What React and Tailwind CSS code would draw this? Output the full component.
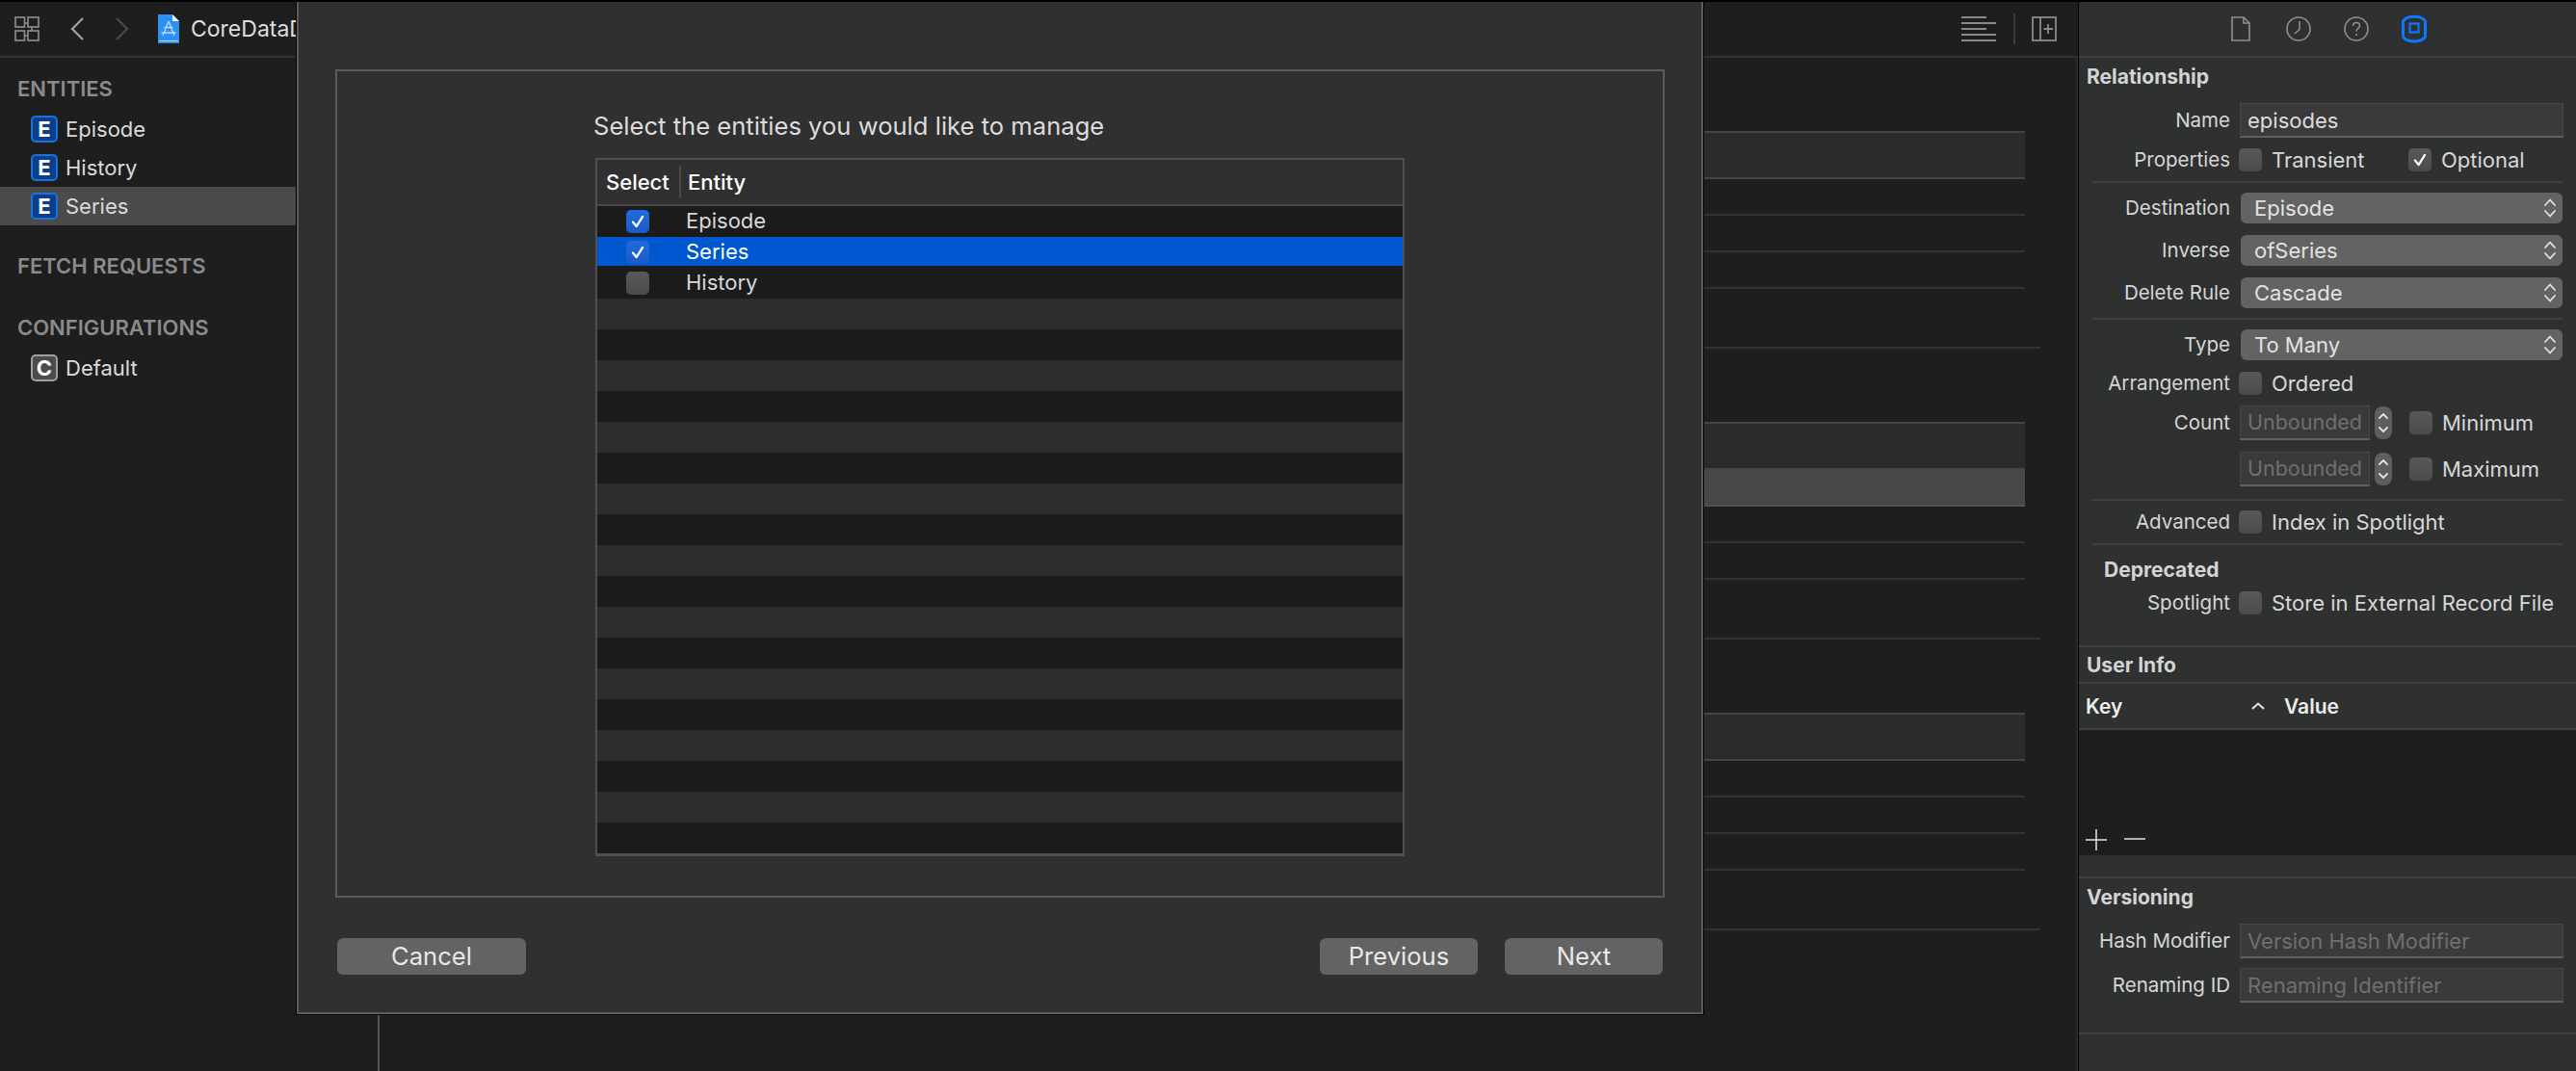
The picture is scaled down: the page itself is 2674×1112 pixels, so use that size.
import React from 'react';

const ROW_COUNT = 21;
const entities = [
  { name: 'Episode', checked: true },
  { name: 'Series', checked: true, selected: true },
  { name: 'History', checked: false },
];

const ENTITY_ICON = 'border-2 border-[#1c70dc] bg-[#0b3f88]';
const CONFIG_ICON = 'border-2 border-[#a0a0a0] bg-[#4c4c4c]';

function SidebarHeading({ children, className }) {
  return (
    <div className={`h-[28px] flex items-center pl-[18px] text-[22px] font-semibold text-[#8b8b8b] ${className}`}>
      {children}
    </div>
  );
}

function SidebarRow({ letter, label, active, iconClass }) {
  return (
    <div className={`h-[40px] flex items-center pl-[32px] ${active ? 'bg-[#4b4b4b]' : ''}`}>
      <div className={`w-[28px] h-[28px] rounded-[5px] flex items-center justify-center text-[22px] font-bold text-white ${iconClass}`}>
        {letter}
      </div>
      <span className="ml-[8px] text-[22px] text-[#dadada]">{label}</span>
    </div>
  );
}

function EditorBlock({ selected, rows = 3 }) {
  return (
    <div className="mt-[76px] w-[1708px]">
      <div className={`bg-[#2b2b2b] border-t-2 border-[#444] ${selected ? 'h-[48px]' : 'h-[50px] border-b-2'}`} />
      {selected && <div className="h-[40px] bg-[#474747] border-b-2 border-[#525252]" />}
      {Array.from({ length: selected ? 2 : rows }).map((_, i) => (
        <div key={i} className="h-[38px] border-b-2 border-[#333]" />
      ))}
      <div className="h-[62px] w-[1724px] border-b-2 border-[#333]" />
    </div>
  );
}

function Check({ className }) {
  return (
    <svg viewBox="0 0 16 16" className={className} fill="none" stroke="currentColor" strokeWidth="2" strokeLinecap="round" strokeLinejoin="round">
      <path d="M3.5 8.5 L6.8 12.5 L12.5 3.5" />
    </svg>
  );
}

function Checkbox({ checked, blue, className = '' }) {
  const tone = blue
    ? 'bg-gradient-to-b from-[#1f6be0] to-[#1a5bc4]'
    : 'bg-gradient-to-b from-[#595959] to-[#4b4b4b]';
  return (
    <span className={`w-[24px] h-[24px] shrink-0 rounded-[5px] flex items-center justify-center text-white ${tone} ${className}`}>
      {checked && <Check className="w-[18px] h-[18px]" />}
    </span>
  );
}

function UpDown({ className }) {
  return (
    <svg viewBox="0 0 14 22" className={className} fill="none" stroke="currentColor" strokeWidth="1.8" strokeLinecap="round" strokeLinejoin="round">
      <path d="M2 8 L7 2.5 L12 8" />
      <path d="M2 14 L7 19.5 L12 14" />
    </svg>
  );
}

function Label({ children }) {
  return <span className="w-[157px] shrink-0 text-right text-[20.5px] text-[#d6d6d6]">{children}</span>;
}

function Popup({ label, value, className }) {
  return (
    <div className={`flex items-center h-[32px] ${className}`}>
      <Label>{label}</Label>
      <div className="ml-[11px] w-[334px] h-[32px] rounded-[6px] bg-[#636363] flex items-center justify-between pl-[14px] pr-[6px] text-[22px] text-[#e2e2e2]">
        <span>{value}</span>
        <UpDown className="w-[14px] h-[22px] text-[#e2e2e2]" />
      </div>
    </div>
  );
}

function Field({ value, muted, className = 'w-[336px] text-[22px]' }) {
  return (
    <div className={`h-[36px] bg-[#3a3a3a] border border-[#474747] border-b-2 border-b-[#606060] flex items-center pl-[7px] pt-[1px] whitespace-nowrap ${muted ? 'text-[#6f6f6f]' : 'text-[#dcdcdc]'} ${className}`}>
      {value}
    </div>
  );
}

function Separator({ className }) {
  return <div className={`h-[2px] ml-[14px] mr-[14px] bg-[#414242] ${className}`} />;
}

function CheckRow({ label, text, className }) {
  return (
    <div className={`flex items-center h-[24px] ${className}`}>
      <Label>{label}</Label>
      <Checkbox className="ml-[9px]" />
      <span className="ml-[10px] whitespace-nowrap text-[22px] text-[#d8d8d8]">{text}</span>
    </div>
  );
}

function CountRow({ label, text, className }) {
  return (
    <div className={`flex items-center h-[36px] ${className}`}>
      <Label>{label}</Label>
      <div className="ml-[10px]">
        <Field value="Unbounded" muted className="w-[135px] text-[21.5px]" />
      </div>
      <div className="ml-[5px] w-[18px] h-[34px] rounded-[8px] bg-[#5e5e5e] flex items-center justify-center text-[#e0e0e0]">
        <svg viewBox="0 0 12 26" className="w-[12px] h-[26px]" fill="none" stroke="currentColor" strokeWidth="1.8" strokeLinecap="round" strokeLinejoin="round">
          <path d="M2 8 L6 4 L10 8" />
          <path d="M2 18 L6 22 L10 18" />
        </svg>
      </div>
      <Checkbox className="ml-[18px]" />
      <span className="ml-[10px] text-[22px] text-[#d8d8d8]">{text}</span>
    </div>
  );
}

function InspectorTabs() {
  return (
    <div className="h-[58px] border-b-2 border-[#414242] flex items-center pl-[138px] text-[#8f8f8f]">
      <div className="w-[60px] flex justify-center">
        <svg viewBox="0 0 20 26" className="w-[20px] h-[26px]" fill="none" stroke="currentColor" strokeWidth="1.6">
          <path d="M1 1 H13 L19 7 V25 H1 Z" />
          <path d="M13 1 V7 H19" />
        </svg>
      </div>
      <div className="w-[60px] flex justify-center">
        <svg viewBox="0 0 26 26" className="w-[26px] h-[26px]" fill="none" stroke="currentColor" strokeWidth="1.6">
          <circle cx="13" cy="13" r="12" />
          <path d="M14 5 V13.5 L9 18" />
        </svg>
      </div>
      <div className="w-[60px] flex justify-center">
        <svg viewBox="0 0 26 26" className="w-[26px] h-[26px]" fill="none" stroke="currentColor" strokeWidth="1.6">
          <circle cx="13" cy="13" r="12" />
          <path d="M9.5 10 C9.5 7.5 11 6.5 13 6.5 C15 6.5 16.5 7.8 16.5 9.7 C16.5 12.2 13 12.5 13 15.5" />
          <path d="M13 18 V20" />
        </svg>
      </div>
      <div className="w-[60px] flex justify-center">
        <svg viewBox="0 0 26 30" className="w-[26px] h-[30px]" fill="none" stroke="#0a78ff">
          <path strokeWidth="3" d="M1.5 7 C5 0.5 21 0.5 24.5 7 V23 C21 29.5 5 29.5 1.5 23 Z" />
          <rect x="8.5" y="9.5" width="9" height="9" strokeWidth="2.2" />
        </svg>
      </div>
    </div>
  );
}

function Inspector() {
  return (
    <div className="w-[517px] shrink-0 border-l border-black bg-[#2f3030] text-[21px] leading-none">
      <InspectorTabs />
      <div className="h-[38px] flex items-center pl-[8px] font-bold text-[#d4d4d4]">Relationship</div>
      <div className="flex items-center mt-[9px]">
        <Label>Name</Label>
        <div className="ml-[10px]"><Field value="episodes" /></div>
      </div>
      <div className="flex items-center h-[24px] mt-[11px]">
        <Label>Properties</Label>
        <div className="ml-[9px] w-[176px] flex items-center">
          <Checkbox />
          <span className="ml-[10px] text-[22px] text-[#d8d8d8]">Transient</span>
        </div>
        <Checkbox checked />
        <span className="ml-[10px] text-[22px] text-[#d8d8d8]">Optional</span>
      </div>
      <Separator className="mt-[10px]" />
      <Popup label="Destination" value="Episode" className="mt-[10px]" />
      <Popup label="Inverse" value="ofSeries" className="mt-[12px]" />
      <Popup label="Delete Rule" value="Cascade" className="mt-[12px]" />
      <Separator className="mt-[10px]" />
      <Popup label="Type" value="To Many" className="mt-[10px]" />
      <CheckRow label="Arrangement" text="Ordered" className="mt-[12px]" />
      <CountRow label="Count" text="Minimum" className="mt-[11px]" />
      <CountRow text="Maximum" className="mt-[12px]" />
      <Separator className="mt-[13px]" />
      <CheckRow label="Advanced" text="Index in Spotlight" className="mt-[10px]" />
      <Separator className="mt-[10px]" />
      <div className="h-[30px] mt-[10px] flex items-center pl-[26px] font-bold text-[#d4d4d4]">Deprecated</div>
      <CheckRow label="Spotlight" text="Store in External Record File" className="mt-[8px]" />
      <div className="h-[2px] mt-[32px] bg-[#414242]" />
      <div className="h-[36px] flex items-center pl-[8px] font-bold text-[#d4d4d4]">User Info</div>
      <div className="h-[2px] bg-[#414242]" />
      <div className="h-[46px] flex items-center font-semibold text-[#ececec]">
        <span className="w-[75px] pl-[7px]">Key</span>
        <svg viewBox="0 0 14 8" className="ml-[104px] w-[14px] h-[8px] text-[#e6e6e6]" fill="none" stroke="currentColor" strokeWidth="2">
          <path d="M1 7 L7 1.5 L13 7" />
        </svg>
        <span className="ml-[20px]">Value</span>
      </div>
      <div className="h-[2px] bg-[#414242]" />
      <div className="h-[130px] bg-[#1e1e1e] flex items-end pb-[5px] pl-[7px] text-[#e6e6e6]">
        <svg viewBox="0 0 22 22" className="w-[22px] h-[22px]" fill="none" stroke="currentColor" strokeWidth="1.5">
          <path d="M0 11 H22 M11 0 V22" />
        </svg>
        <svg viewBox="0 0 22 22" className="ml-[18px] w-[22px] h-[22px]" fill="none" stroke="currentColor" strokeWidth="1.5">
          <path d="M0 10 H22" />
        </svg>
      </div>
      <div className="h-[22px]" />
      <div className="h-[2px] bg-[#414242]" />
      <div className="h-[38px] flex items-center pl-[8px] font-bold text-[#d4d4d4]">Versioning</div>
      <div className="flex items-center mt-[9px]">
        <Label>Hash Modifier</Label>
        <div className="ml-[10px]"><Field value="Version Hash Modifier" muted /></div>
      </div>
      <div className="flex items-center mt-[10px]">
        <Label>Renaming ID</Label>
        <div className="ml-[10px]"><Field value="Renaming Identifier" muted /></div>
      </div>
      <div className="h-[2px] mt-[31px] bg-[#414242]" />
    </div>
  );
}

function Toolbar() {
  return (
    <div className="h-[58px] border-b-2 border-[#333] flex items-center">
      <svg viewBox="0 0 26 26" className="ml-[15px] w-[26px] h-[26px] text-[#8a8a8a]" fill="none" stroke="currentColor" strokeWidth="1.7">
        <rect x="1" y="1" width="9.5" height="10" />
        <rect x="14" y="1" width="11" height="10" />
        <rect x="1" y="15" width="9.5" height="10" />
        <rect x="14" y="15" width="11" height="10" />
        <path d="M10.5 7 H14 M18 11 V15 M10.5 20 H14" />
      </svg>
      <svg viewBox="0 0 14 24" className="ml-[32px] w-[14px] h-[24px] text-[#a2a2a2]" fill="none" stroke="currentColor" strokeWidth="2.2">
        <path d="M13 1 L2 12 L13 23" />
      </svg>
      <svg viewBox="0 0 14 24" className="ml-[33px] w-[14px] h-[24px] text-[#4a4a4a]" fill="none" stroke="currentColor" strokeWidth="2.2">
        <path d="M1 1 L12 12 L1 23" />
      </svg>
      <svg viewBox="0 0 22 30" className="ml-[30px] w-[22px] h-[30px]">
        <path d="M0 0 H15 L22 7 V30 H0 Z" fill="#2e8ff2" />
        <path d="M15 0 L22 7 H15 Z" fill="#e8f2ff" />
        <path d="M1 27.5 H21" stroke="#bcdcff" strokeWidth="1" />
        <path d="M11 7 L5 22 M11 7 L17 22 M3.5 19 H18.5 M6.5 13.5 H15.5" stroke="#bcdcff" strokeWidth="1.3" fill="none" />
      </svg>
      <span className="ml-[12px] text-[23px] text-[#dedede]">CoreDataD</span>
      <svg viewBox="0 0 36 26" className="ml-auto w-[36px] h-[26px] text-[#8a8a8a]" fill="none" stroke="currentColor" strokeWidth="2">
        <path d="M0 1 H26 M0 7 H36 M0 13 H26 M0 19 H36 M0 25 H36" />
      </svg>
      <div className="ml-[18px] w-[2px] h-[32px] bg-[#3a3a3a]" />
      <svg viewBox="0 0 26 26" className="ml-[17px] mr-[22px] w-[26px] h-[26px] text-[#8a8a8a]" fill="none" stroke="currentColor" strokeWidth="1.8">
        <rect x="1" y="1" width="24" height="24" />
        <path d="M9 1 V25 M12.5 13 H22 M17 8 V18" />
      </svg>
    </div>
  );
}

function WizardRow({ entity, index }) {
  if (!entity) {
    return <div className={`h-[32px] ${index % 2 === 0 ? 'bg-[#1b1b1b]' : 'bg-[#2d2d2d]'}`} />;
  }
  return (
    <div className="h-[32px] bg-[#1b1b1b]">
      <div className={`h-[30px] flex items-center pl-[30px] text-[22px] ${entity.selected ? 'bg-[#0058d0] text-white' : 'text-[#d8d8d8]'}`}>
        <Checkbox checked={entity.checked} blue={entity.checked} className="mt-[2px]" />
        <span className="ml-[38px]">{entity.name}</span>
      </div>
    </div>
  );
}

function WizardButton({ children, className }) {
  return (
    <div className={`h-[38px] rounded-[6px] bg-[#636363] flex items-center justify-center text-[25.6px] text-[#e8e8e8] ${className}`}>
      {children}
    </div>
  );
}

function Dialog() {
  return (
    <div className="absolute left-[308px] top-0 w-[1460px] h-[1051px] bg-[#303030] border-x-2 border-b-2 border-[#5c5c5c] shadow-[0_0_0_1px_#000] pl-[38px] pt-[70px]">
      <div className="w-[1380px] h-[860px] border-2 border-[#5c5c5c] pl-[266px] pt-[40px]">
        <div className="h-[34px] flex items-center text-[25.6px] text-[#dcdcdc]">
          Select the entities you would like to manage
        </div>
        <div className="mt-[16px] ml-[2px] w-[840px] border-2 border-b-[3px] border-[#505050]">
          <div className="h-[48px] border-b-2 border-[#484848] flex items-center text-[22px] font-medium text-white">
            <span className="w-[85px] pl-[9px]">Select</span>
            <div className="w-[2px] h-[34px] bg-[#484848]" />
            <span className="ml-[7px]">Entity</span>
          </div>
          {Array.from({ length: ROW_COUNT }).map((_, i) => (
            <WizardRow key={i} index={i} entity={entities[i]} />
          ))}
        </div>
      </div>
      <div className="mt-[42px] flex pl-[2px]">
        <WizardButton className="w-[196px]">Cancel</WizardButton>
        <WizardButton className="ml-[824px] w-[164px]">Previous</WizardButton>
        <WizardButton className="ml-[28px] w-[164px]">Next</WizardButton>
      </div>
    </div>
  );
}

export default function App() {
  return (
    <div className="relative w-[2674px] h-[1112px] overflow-hidden bg-[#1e1e1e] border-t-2 border-black flex font-[Inter,'Liberation_Sans',sans-serif] leading-none">
      <div className="flex-1 flex flex-col">
        <Toolbar />
        <div className="flex-1 flex">
          <div className="w-[394px] shrink-0 border-r-2 border-[#555]">
            <SidebarHeading className="mt-[18px]">ENTITIES</SidebarHeading>
            <div className="mt-[8px]">
              <SidebarRow letter="E" label="Episode" iconClass={ENTITY_ICON} />
              <SidebarRow letter="E" label="History" iconClass={ENTITY_ICON} />
              <SidebarRow letter="E" label="Series" active iconClass={ENTITY_ICON} />
            </div>
            <SidebarHeading className="mt-[28px]">FETCH REQUESTS</SidebarHeading>
            <SidebarHeading className="mt-[36px]">CONFIGURATIONS</SidebarHeading>
            <div className="mt-[8px]">
              <SidebarRow letter="C" label="Default" iconClass={CONFIG_ICON} />
            </div>
          </div>
          <div className="flex-1 border-r-2 border-[#2c2c2c]">
            <EditorBlock />
            <EditorBlock selected />
            <EditorBlock />
          </div>
        </div>
      </div>
      <Inspector />
      <Dialog />
    </div>
  );
}
